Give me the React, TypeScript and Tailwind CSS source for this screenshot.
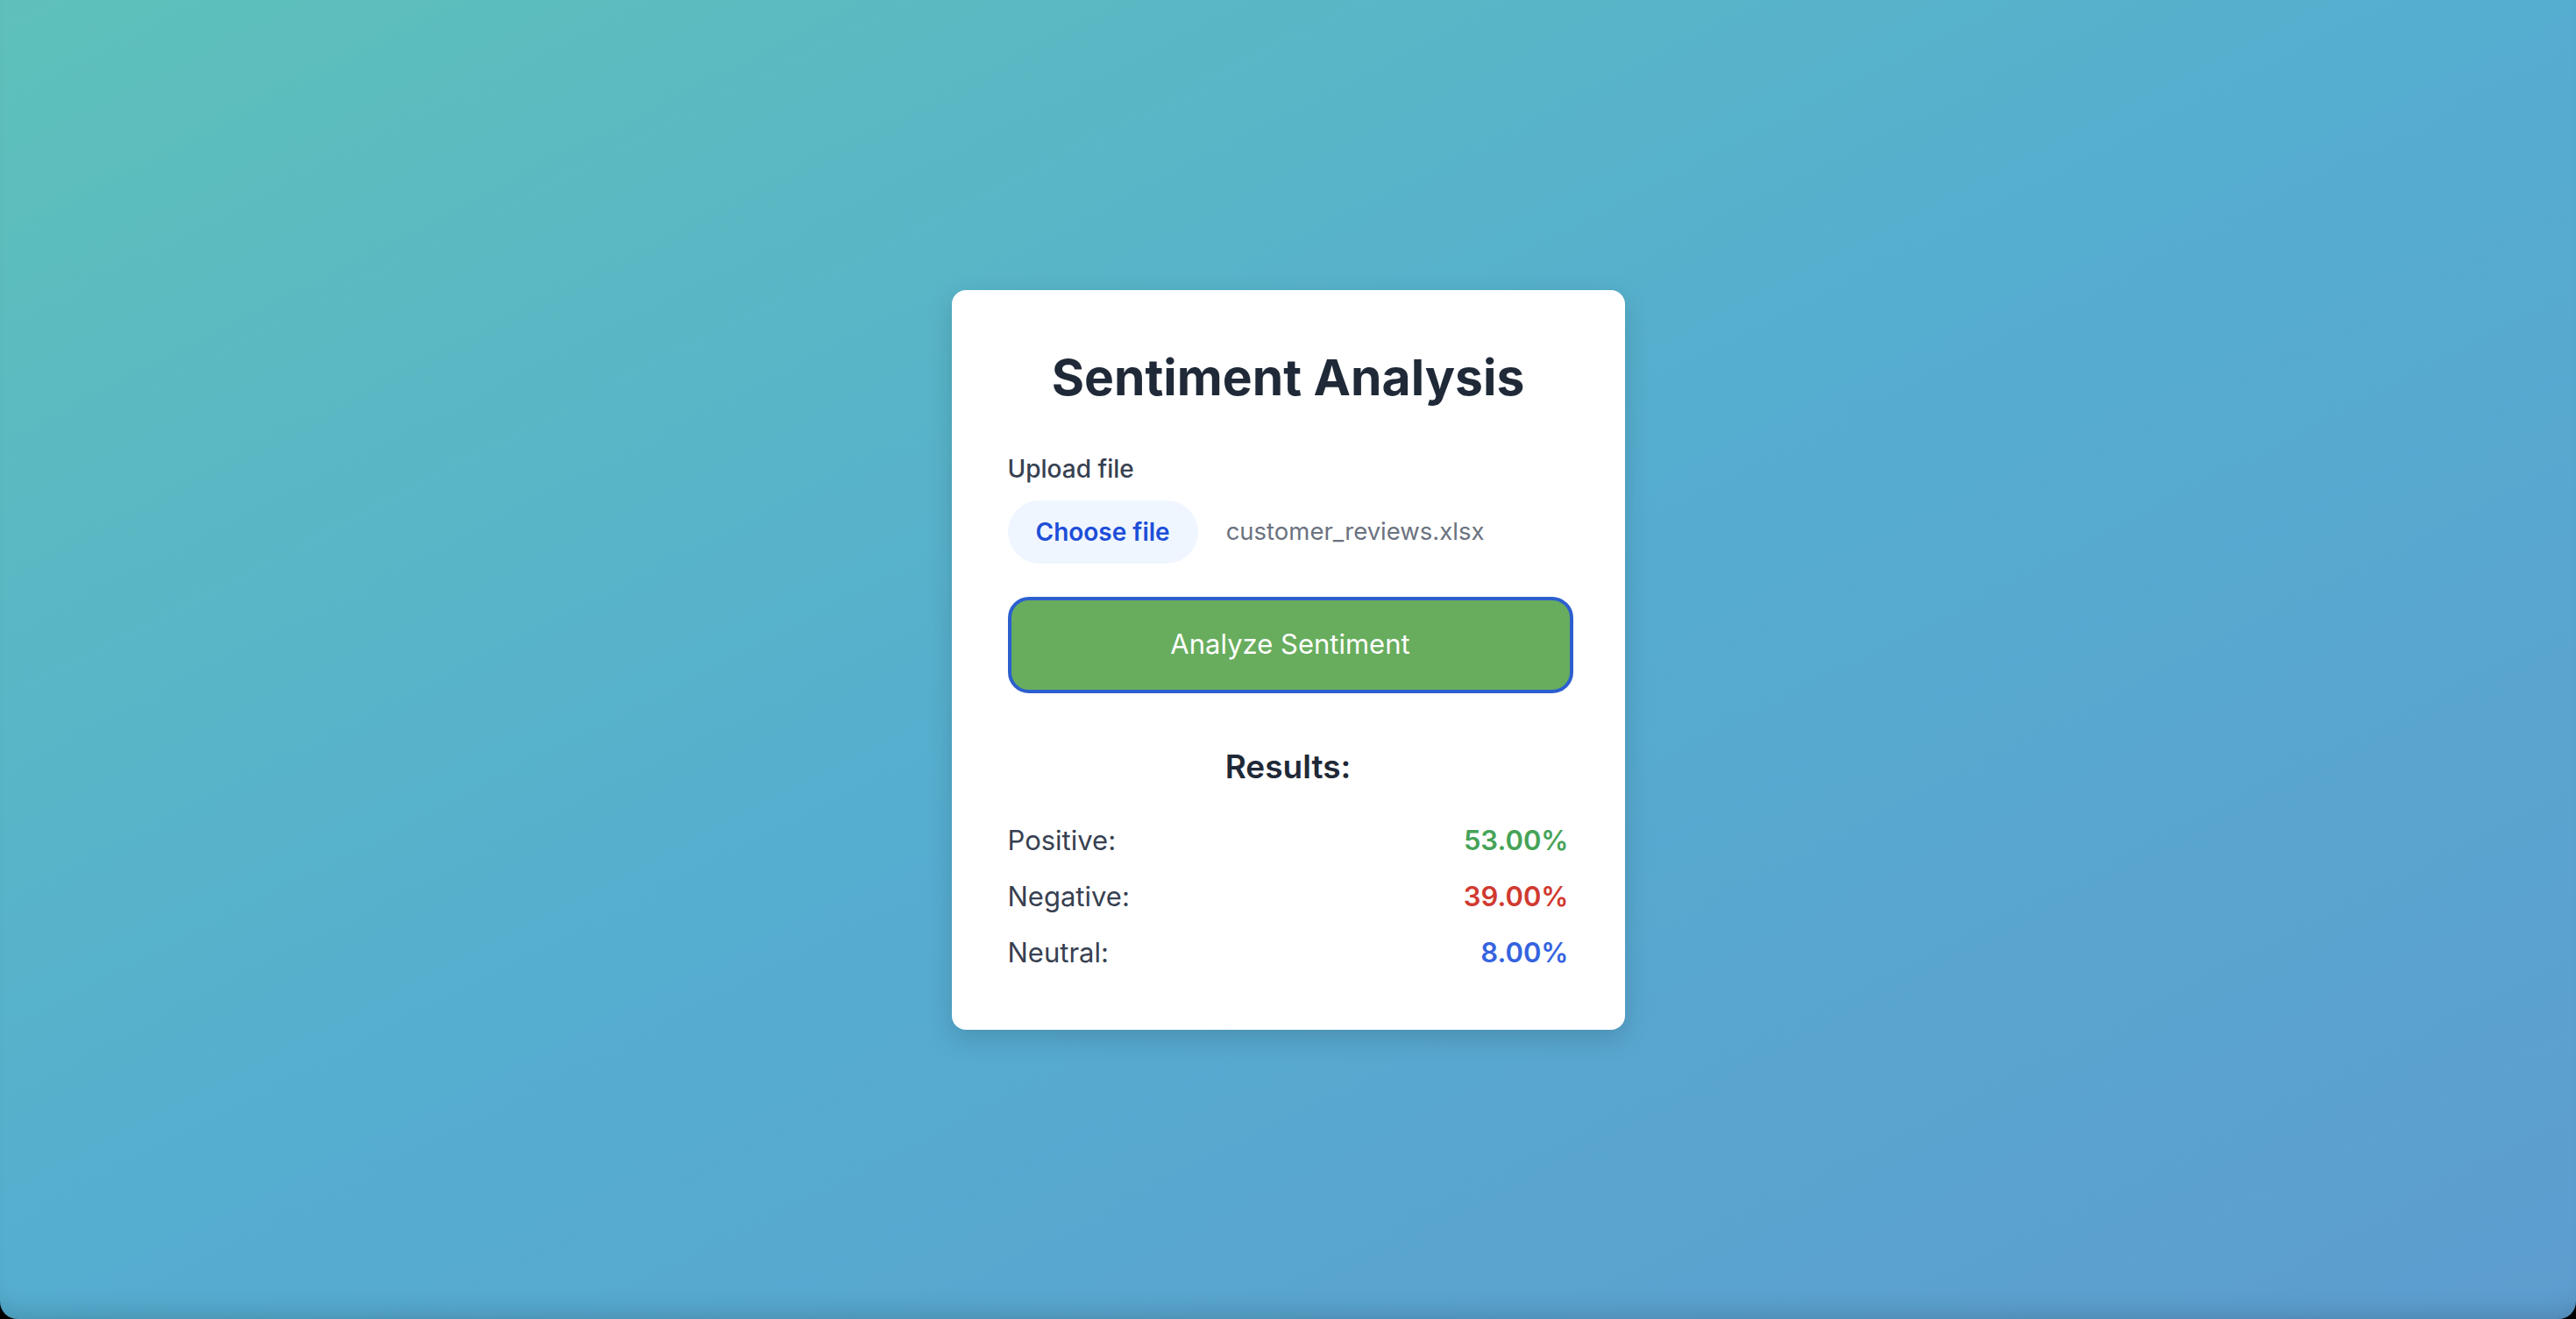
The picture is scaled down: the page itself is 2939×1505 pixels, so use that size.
export default function App() {
  const results = [
    { label: "Positive:", value: "53.00%", color: "text-[#46a357]" },
    { label: "Negative:", value: "39.00%", color: "text-[#d03a30]" },
    { label: "Neutral:", value: "8.00%", color: "text-[#3563df]" },
  ];

  return (
    <div className="h-[1505px] w-full bg-black font-['Inter',sans-serif]">
      <div className="flex h-full w-full items-center justify-center rounded-b-[20px] bg-gradient-to-br from-[#5ec1b9] via-[#55add0] to-[#5d9dcf] shadow-[inset_0_-28px_30px_-24px_rgba(0,0,0,0.18)]">
        <div className="w-[768px] rounded-[16px] bg-white p-16 shadow-[0_10px_30px_rgba(0,0,0,0.15)]">
          <h1 className="mb-12 text-center text-[57px] font-bold leading-[72px] text-[#1f2937]">
            Sentiment Analysis
          </h1>

          {/* Upload */}
          <div className="mb-4 text-[28px] font-medium leading-[40px] text-[#374151]">
            Upload file
          </div>
          <div className="flex items-center">
            <div className="mr-8 flex h-[72px] items-center rounded-full bg-[#eff6ff] px-8 text-[28px] font-semibold text-[#1d4ed8]">
              Choose file
            </div>
            <span className="text-[27.5px] text-[#6b7280]">customer_reviews.xlsx</span>
          </div>

          <button className="mt-[38px] flex h-[110px] w-[calc(100%+5px)] items-center justify-center rounded-[24px] border-4 border-[#2c5fcf] bg-[#68ad5e] text-[31px] text-white">
            Analyze Sentiment
          </button>

          {/* Results */}
          <div className="mt-[56px]">
            <h2 className="mb-8 text-center text-[37px] font-semibold leading-[56px] text-[#1f2937]">
              Results:
            </h2>
            <div className="flex flex-col gap-4">
              {results.map((r) => (
                <div key={r.label} className="flex items-center justify-between text-[31px] leading-[48px]">
                  <span className="text-[#374151]">{r.label}</span>
                  <span className={`font-semibold ${r.color}`}>{r.value}</span>
                </div>
              ))}
            </div>
          </div>
        </div>
      </div>
    </div>
  );
}
